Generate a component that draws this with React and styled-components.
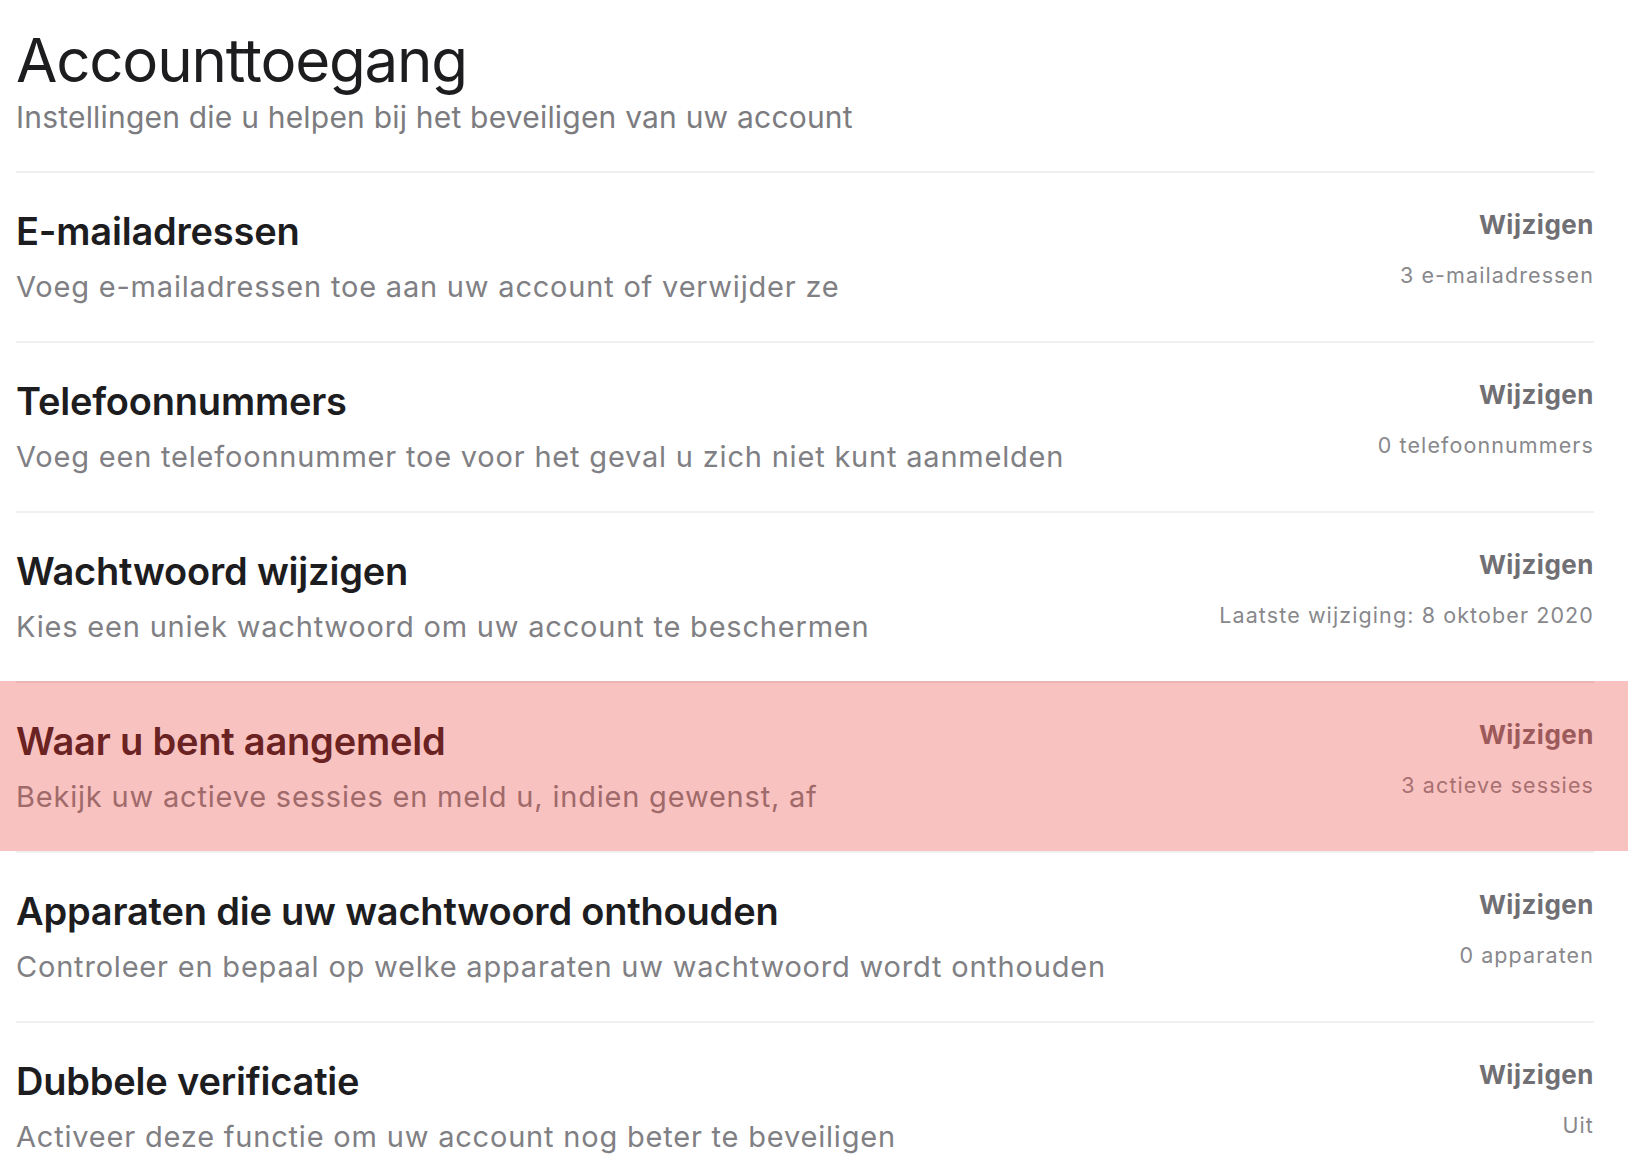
import React from 'react'
import styled, { createGlobalStyle } from 'styled-components';

const GlobalStyle = createGlobalStyle`
  body {
    margin: 0;
    background: #ffffff;
    font-family: Inter, "Noto Sans", sans-serif;
    -webkit-font-smoothing: antialiased;
  }
`;

const rows = [
    { title: 'E-mailadressen', desc: 'Voeg e-mailadressen toe aan uw account of verwijder ze', info: '3 e-mailadressen' },
    { title: 'Telefoonnummers', desc: 'Voeg een telefoonnummer toe voor het geval u zich niet kunt aanmelden', info: '0 telefoonnummers' },
    { title: 'Wachtwoord wijzigen', desc: 'Kies een uniek wachtwoord om uw account te beschermen', info: 'Laatste wijziging: 8 oktober 2020' },
    { title: 'Waar u bent aangemeld', desc: 'Bekijk uw actieve sessies en meld u, indien gewenst, af', info: '3 actieve sessies', highlight: true },
    { title: 'Apparaten die uw wachtwoord onthouden', desc: 'Controleer en bepaal op welke apparaten uw wachtwoord wordt onthouden', info: '0 apparaten' },
    { title: 'Dubbele verificatie', desc: 'Activeer deze functie om uw account nog beter te beveiligen', info: 'Uit' },
];

function App() {
    return (
        <>
            <GlobalStyle />
            <Page>
                <Header>
                    <Title>Accounttoegang</Title>
                    <Subtitle>Instellingen die u helpen bij het beveiligen van uw account</Subtitle>
                </Header>
                {rows.map((r) => (
                    <Row key={r.title} $highlight={r.highlight}>
                        <Texts>
                            <RowTitle $highlight={r.highlight}>{r.title}</RowTitle>
                            <RowDesc $highlight={r.highlight}>{r.desc}</RowDesc>
                        </Texts>
                        <Side>
                            <Change $highlight={r.highlight}>Wijzigen</Change>
                            <Info $highlight={r.highlight}>{r.info}</Info>
                        </Side>
                    </Row>
                ))}
            </Page>
        </>
    )
}

const Page = styled.div`
    padding: 0 34px 0 16px;
`;

const Header = styled.div`
    padding: 30px 0 37px;
`;

const Title = styled.h1`
    margin: 0;
    font-size: 60px;
    line-height: 60px;
    font-weight: 400;
    letter-spacing: -1.2px;
    color: #1d1d1f;
`;

const Subtitle = styled.p`
    margin: 10px 0 0;
    font-size: 30px;
    line-height: 34px;
    color: #7c7c80;
    letter-spacing: 0.2px;
`;

const Row = styled.div`
    display: flex;
    justify-content: space-between;
    align-items: flex-start;
    padding: 35px 0 37px;
    border-top: 2px solid rgba(0, 0, 0, 0.06);
    background: ${p => p.$highlight ? '#f8c2c1' : 'transparent'};
    box-shadow: ${p => p.$highlight ? '-16px 0 0 #f8c2c1, 34px 0 0 #f8c2c1' : 'none'};
`;

const Texts = styled.div`
    display: flex;
    flex-direction: column;
    gap: 16px;
`;

const RowTitle = styled.div`
    font-size: 38px;
    line-height: 46px;
    font-weight: 600;
    letter-spacing: -0.2px;
    color: ${p => p.$highlight ? '#6b2222' : '#1d1d1f'};
`;

const RowDesc = styled.div`
    font-size: 29px;
    line-height: 34px;
    letter-spacing: 0.8px;
    color: ${p => p.$highlight ? '#a06a6a' : '#808084'};
`;

const Side = styled.div`
    display: flex;
    flex-direction: column;
    align-items: flex-end;
    gap: 22px;
    padding-top: 2px;
`;

const Change = styled.div`
    font-size: 26px;
    line-height: 30px;
    font-weight: 700;
    letter-spacing: 0.5px;
    color: ${p => p.$highlight ? '#9c5a5a' : '#707074'};
`;

const Info = styled.div`
    font-size: 21.5px;
    line-height: 26px;
    letter-spacing: 1.1px;
    color: ${p => p.$highlight ? '#a87070' : '#88888c'};
`;

export default App;
